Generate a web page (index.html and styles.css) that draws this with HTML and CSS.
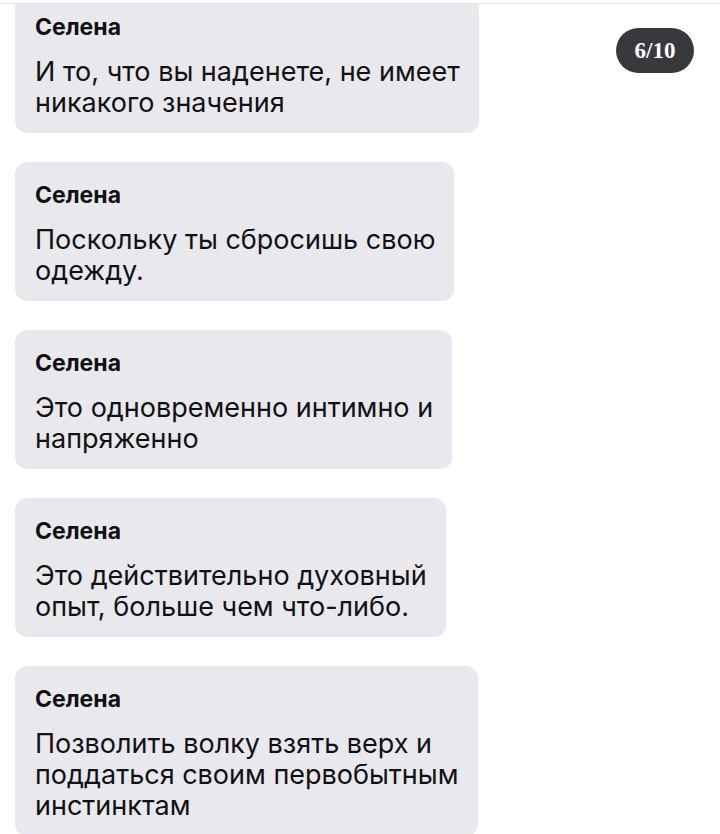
FILE: index.html
```html
<!DOCTYPE html>
<html lang="ru">
<head>
<meta charset="utf-8">
<link rel="stylesheet" href="styles.css">
</head>
<body>
<div class="screen">
  <div class="topbar"></div>
  <div class="feed">
    <div class="bubble first">
      <div class="name">Селена</div>
      <div class="msg">И то, что вы наденете, не имеет<br>никакого значения</div>
    </div>
    <div class="bubble">
      <div class="name">Селена</div>
      <div class="msg">Поскольку ты сбросишь свою<br>одежду.</div>
    </div>
    <div class="bubble">
      <div class="name">Селена</div>
      <div class="msg">Это одновременно интимно и<br>напряженно</div>
    </div>
    <div class="bubble">
      <div class="name">Селена</div>
      <div class="msg">Это действительно духовный<br>опыт, больше чем что-либо.</div>
    </div>
    <div class="bubble">
      <div class="name">Селена</div>
      <div class="msg">Позволить волку взять верх и<br>поддаться своим первобытным<br>инстинктам</div>
    </div>
  </div>
  <div class="badge">6/10</div>
</div>
</body>
</html>
```
FILE: styles.css
```css
html, body {
  margin: 0;
  padding: 0;
  background: #ffffff;
}
.screen {
  position: relative;
  width: 720px;
  height: 834px;
  overflow: hidden;
  font-family: Inter, "Liberation Sans", Arial, sans-serif;
  color: #111113;
}
.topbar {
  position: relative;
  z-index: 2;
  height: 3px;
  background: #ffffff;
  border-bottom: 1px solid #e6e6ea;
}
.feed {
  display: flex;
  flex-direction: column;
  align-items: flex-start;
  gap: 29px;
  padding-left: 15px;
}
.bubble {
  background: #e9e8ed;
  border-radius: 12px;
  padding: 20px 19px 15px 20px;
  width: fit-content;
}
.bubble.first {
  margin-top: -10px;
}
.name {
  font-weight: 700;
  font-size: 23px;
  line-height: 26px;
  margin-bottom: 16px;
}
.msg {
  font-size: 27px;
  line-height: 31px;
  font-weight: 400;
  white-space: nowrap;
}
.badge {
  position: absolute;
  left: 616px;
  top: 28px;
  width: 78px;
  height: 45px;
  border-radius: 23px;
  background: #39383c;
  color: #ffffff;
  font-family: "Liberation Serif", serif;
  font-weight: 700;
  font-size: 23px;
  display: flex;
  align-items: center;
  justify-content: center;
}
```
